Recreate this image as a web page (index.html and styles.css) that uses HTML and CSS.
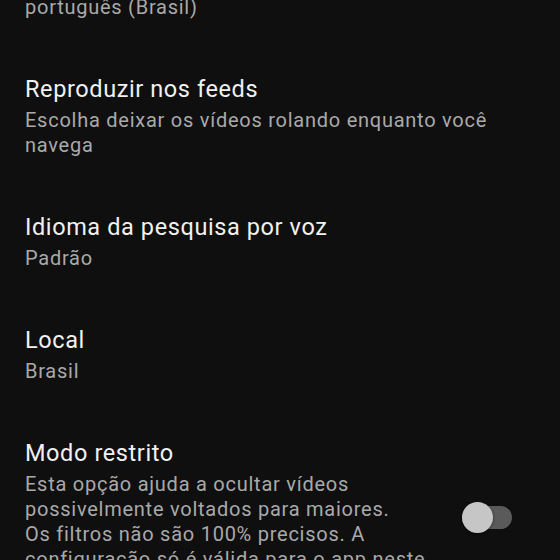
FILE: index.html
```html
<!DOCTYPE html>
<html lang="pt-BR">
<head>
    <meta charset="UTF-8">
    <meta name="viewport" content="width=device-width, initial-scale=1.0">
    <title>Configurações gerais</title>
    <link rel="stylesheet" href="styles.css">
</head>
<body>
    <div class="settings">
        <div class="item">
            <div class="item-text">
                <div class="title">Idioma do app</div>
                <div class="subtitle">português (Brasil)</div>
            </div>
        </div>
        <div class="item">
            <div class="item-text">
                <div class="title">Reproduzir nos feeds</div>
                <div class="subtitle">Escolha deixar os vídeos rolando enquanto você navega</div>
            </div>
        </div>
        <div class="item">
            <div class="item-text">
                <div class="title">Idioma da pesquisa por voz</div>
                <div class="subtitle">Padrão</div>
            </div>
        </div>
        <div class="item">
            <div class="item-text">
                <div class="title">Local</div>
                <div class="subtitle">Brasil</div>
            </div>
        </div>
        <div class="item">
            <div class="item-text narrow">
                <div class="title">Modo restrito</div>
                <div class="subtitle">Esta opção ajuda a ocultar vídeos possivelmente voltados para maiores.<br>Os filtros não são 100% precisos. A configuração só é válida para o app neste dispositivo.</div>
            </div>
            <div class="switch">
                <div class="switch-track"></div>
                <div class="switch-thumb"></div>
            </div>
        </div>
    </div>
</body>
</html>
```

FILE: styles.css
```css
* {
    box-sizing: border-box;
    margin: 0;
    padding: 0;
}
body {
    background-color: #0f0f0f;
    font-family: Roboto, "Noto Sans", sans-serif;
    overflow: hidden;
    height: 560px;
}
.settings {
    display: flex;
    flex-direction: column;
    gap: 54px;
    margin-top: -39px;
}
.item {
    display: flex;
    align-items: center;
    padding: 0 48px 0 25px;
}
.item-text {
    flex: 1;
}
.item-text.narrow {
    flex: 0 0 410px;
}
.title {
    font-size: 23.5px;
    line-height: 30px;
    letter-spacing: 0.6px;
    color: #f1f1f1;
}
.subtitle {
    margin-top: 4px;
    font-size: 20px;
    line-height: 25px;
    letter-spacing: 0.75px;
    color: #a9a9a9;
}
.switch {
    position: relative;
    width: 50px;
    height: 31px;
    margin-left: auto;
}
.switch-track {
    position: absolute;
    left: 0;
    right: 0;
    top: 4px;
    height: 23px;
    border-radius: 12px;
    background-color: #5a5a5a;
}
.switch-thumb {
    position: absolute;
    left: 0;
    top: 0;
    width: 31px;
    height: 31px;
    border-radius: 50%;
    background-color: #c6c6c6;
    box-shadow: 0 1px 3px rgba(0,0,0,0.5);
}
```
